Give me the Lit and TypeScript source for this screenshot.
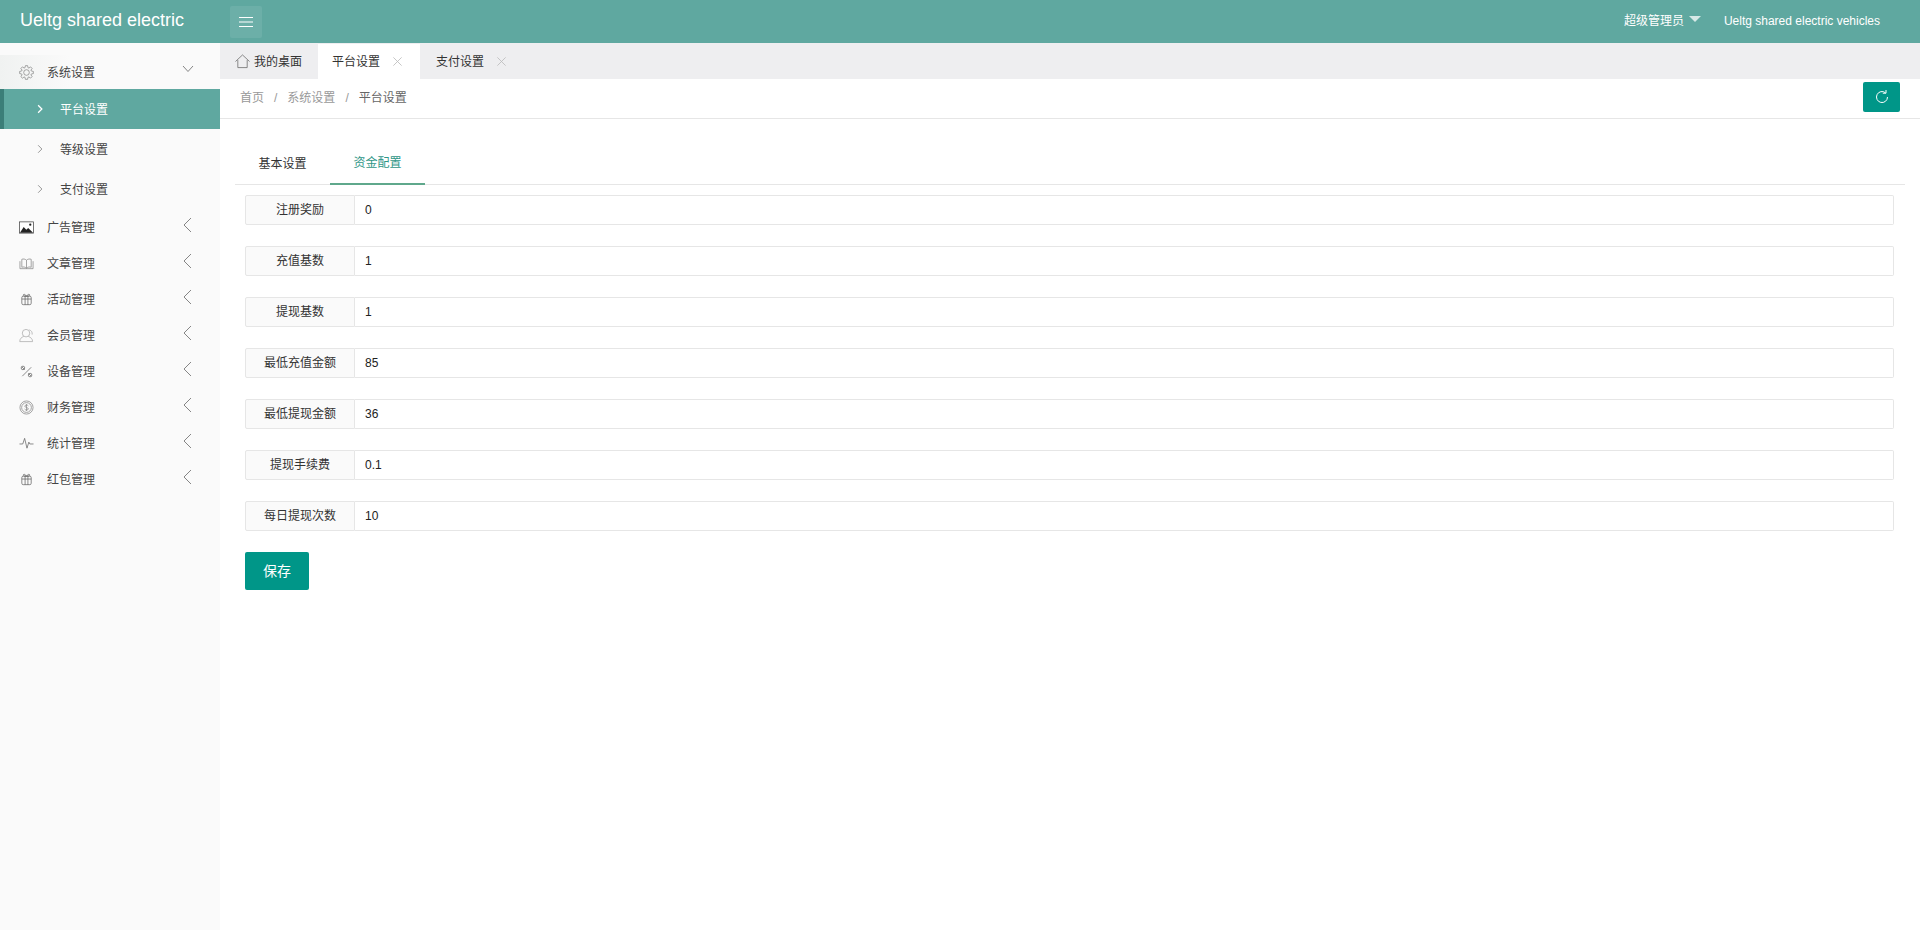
import { LitElement, html, css, svg } from "lit";
import { customElement } from "lit/decorators.js";

const ic = (b: unknown, cls = "ic") => html`<svg class=${cls} viewBox="0 0 16 16" fill="none" stroke="currentColor" stroke-width="0.8">${b}</svg>`;

function gearPath() {
  const pts: string[] = [];
  const teeth = 8;
  for (let i = 0; i < teeth; i++) {
    const a = (i / teeth) * Math.PI * 2;
    const w = Math.PI / teeth;
    const p = (r: number, t: number) => `${(8 + r * Math.cos(t)).toFixed(2)} ${(8 + r * Math.sin(t)).toFixed(2)}`;
    pts.push(p(5.4, a - w * 0.75), p(7.4, a - w * 0.4), p(7.4, a + w * 0.4), p(5.4, a + w * 0.75));
  }
  return "M" + pts.join("L") + "Z";
}

const icons: Record<string, unknown> = {
  gear: svg`<circle cx="8" cy="8" r="3"/><path d=${gearPath()}/>`,
  image: svg`<rect x="0.5" y="2" width="15" height="12" fill="#fff" stroke="#444"/><path d="M1 13.500l4-6 2.800 3 2-2 5.200 5z" fill="#222" stroke="none"/><circle cx="12" cy="5" r="1.200" fill="#222" stroke="none"/>`,
  book: svg`<path d="M8 4.500C6.500 3 4.500 3 3 3.500V12C4.500 11.500 6.500 11.500 8 13c1.500-1.500 3.500-1.500 5-1V3.500C11.500 3 9.500 3 8 4.500zM8 4.500V13M1 5.500V13.500H15V5.500"/>`,
  gift: svg`<rect x="3" y="4.500" width="10" height="9" rx="1.500"/><path d="M3 7.500h10M6.500 4.500v9M9.500 4.500v9M8 4.500C6.500 2 4.500 2 4.500 3.500 4.500 4.500 8 4.500 8 4.500zM8 4.500C9.500 2 11.500 2 11.500 3.500 11.500 4.500 8 4.500 8 4.500z"/>`,
  user: svg`<circle cx="7.500" cy="5.500" r="4"/><path d="M5 9C2.500 10 .8 11.500 .8 14.500H14.500C14.500 11.500 12.500 10 10 9M11 2C13 2.500 14.500 4.500 14 7"/>`,
  tool: svg`<path d="M3.500 13L13 3.500M3 3l3 3M10 10l3 3"/><circle cx="4.200" cy="4.200" r="1.900"/><circle cx="11.800" cy="11.800" r="1.900"/>`,
  money: svg`<circle cx="8" cy="8" r="7"/><circle cx="8" cy="8" r="5.200"/><path d="M10 6.300C9.500 5.100 6.200 4.900 6.200 6.600 6.200 8.300 10 7.700 10 9.500 10 11.100 6.500 11 6 9.700M8 4.300v7.400"/>`,
  pulse: svg`<path d="M.5 8.500H4L6 2.500 8.500 13 10.500 6.500 11.500 8.500H15.500"/>`,
};

const L = (p: string) => svg`<path d=${p}/>`;

@customElement("app-root")
export class AppRoot extends LitElement {
  static styles = css`
    :host { display: block; width: 1920px; height: 930px; overflow: hidden; background: #fff; color: #333; font: 12px/1.5 "Liberation Sans", "Noto Sans CJK SC", sans-serif; }
    * { box-sizing: border-box; }
    .top { height: 43px; background: #5fa8a0; color: #fff; display: flex; align-items: center; }
    .logo { width: 230px; padding-left: 20px; padding-bottom: 2px; font-size: 18px; }
    .burger { width: 32px; height: 32px; background: #6cafa8; border-radius: 2px; display: flex; align-items: center; justify-content: center; }
    .b { width: 16px; height: 16px; stroke-width: 1.100; }
    .top .sp { flex: 1; }
    .admin { display: flex; align-items: center; gap: 5px; margin-right: 23px; padding-bottom: 2px; }
    .tri { width: 0; height: 0; border: 6px solid transparent; border-top: 6px solid #d6e9e7; border-bottom: 0; margin-top: -3px; }
    .site { margin-right: 40px; padding-bottom: 2px; }
    .body { display: flex; height: 887px; }
    .side { width: 220px; background: #fafafa; padding-top: 12px; flex: none; }
    .item { height: 36px; display: flex; align-items: center; padding-left: 19px; color: #444; }
    .item.open { height: 34px; background: linear-gradient(90deg, #f0f2f1, #fafafa 70px); }
    .ic { width: 15px; height: 15px; color: #666; flex: none; margin-right: 13px; }
    .ic.light { color: #aaa; }
    .ic.mid { color: #888; }
    .name { flex: 1; padding-top: 1px; }
    .chev { width: 16px; height: 16px; margin-right: 24px; color: #777; margin-top: -4px; flex: none; stroke-width: 0.900; }
    .sub { height: 40px; display: flex; align-items: center; padding-left: 35px; color: #444; }
    .sub span { padding-top: 2px; }
    .arrow { width: 10px; height: 10px; margin-right: 15px; color: #777; flex: none; stroke-width: 1.200; }
    .sub.on { background: #5fa8a0; color: #fff; border-left: 4px solid #3b7e78; padding-left: 31px; }
    .sub.on .arrow { color: #fff; stroke-width: 2; }
    .main { flex: 1; min-width: 0; display: flex; flex-direction: column; }
    .tabs { height: 36px; background: #eeeef0; display: flex; align-items: stretch; padding-top: 1px; }
    .tab { display: flex; align-items: center; padding: 0 15px 0 16px; color: #333; }
    .tab.home { padding: 0 0 0 15px; width: 98px; }
    .h { width: 15px; height: 15px; margin-right: 4px; color: #666; flex: none; }
    .tab.on { background: #fff; width: 102px; padding-left: 14px; padding-right: 0; }
    .x { width: 11px; height: 11px; margin-left: 12px; color: #bbb; flex: none; stroke-width: 1.200; }
    .crumb { height: 40px; border-bottom: 1px solid #e6e6e6; display: flex; align-items: center; padding: 0 0 2px 20px; color: #999; }
    .crumb .s { margin: 0 10px; }
    .crumb .c { color: #666; }
    .crumb .sp { flex: 1; }
    .refresh { width: 37px; height: 30px; background: #009688; border-radius: 2px; margin-right: 20px; margin-top: -1px; color: #fff; display: flex; align-items: center; justify-content: center; }
    .r { width: 16px; height: 16px; stroke-width: 1; }
    .content { padding: 22px 15px 0; }
    .tt { display: flex; height: 44px; border-bottom: 1px solid #e6e6e6; margin-bottom: 10px; }
    .t { width: 95px; display: flex; align-items: center; justify-content: center; height: 44px; padding-top: 2px; color: #333; }
    .t.on { color: #2f9687; border-bottom: 2px solid #5fa88c; padding-top: 2px; }
    .form { padding: 0 11px 0 10px; display: flex; flex-direction: column; gap: 21px; }
    .row { display: flex; height: 30px; }
    .lab { width: 110px; flex: none; border: 1px solid #e6e6e6; border-radius: 2px 0 0 2px; background: #fafafa; display: flex; align-items: center; justify-content: center; color: #333; }
    .val { flex: 1; border: 1px solid #e6e6e6; border-left: 0; border-radius: 0 2px 2px 0; display: flex; align-items: center; padding-left: 10px; color: #222; }
    .save { margin: 21px 0 0 10px; width: 64px; height: 38px; background: #009688; color: #fff; border-radius: 2px; display: flex; align-items: center; justify-content: center; font-size: 14px; }
  `;

  render() {
    const menu = [["image", "广告管理", "ic"], ["book", "文章管理", "ic mid"], ["gift", "活动管理", "ic"], ["user", "会员管理", "ic light"], ["tool", "设备管理", "ic"], ["money", "财务管理", "ic mid"], ["pulse", "统计管理", "ic"], ["gift", "红包管理", "ic"]];
    const rows = [["注册奖励", "0"], ["充值基数", "1"], ["提现基数", "1"], ["最低充值金额", "85"], ["最低提现金额", "36"], ["提现手续费", "0.1"], ["每日提现次数", "10"]];
    const sub = (n: string, on = false) => html`<div class="sub ${on ? "on" : ""}">${ic(L("M5 2l6 6-6 6"), "arrow")}<span>${n}</span></div>`;
    const close = ic(L("M2 2l12 12M14 2L2 14"), "x");
    return html`
      <div class="top">
        <div class="logo">Ueltg shared electric</div>
        <div class="burger">${ic(L("M1 3.500h14M1 8h14M1 12.500h14"), "b")}</div>
        <div class="sp"></div>
        <div class="admin">超级管理员<span class="tri"></span></div>
        <div class="site">Ueltg shared electric vehicles</div>
      </div>
      <div class="body">
        <aside class="side">
          <div class="item open">${ic(icons.gear, "ic mid")}<span class="name">系统设置</span>${ic(L("M3 4l5 5.500 5-5.500"), "chev")}</div>
          ${sub("平台设置", true)}${sub("等级设置")}${sub("支付设置")}
          ${menu.map(([i, n, c]) => html`<div class="item">${ic(icons[i], c)}<span class="name">${n}</span>${ic(L("M11 1L4 8l7 7"), "chev")}</div>`)}
        </aside>
        <main class="main">
          <div class="tabs">
            <div class="tab home">${ic(L("M.5 8L8 1l7.500 7M3 6.500V14.500h10V6.500"), "h")}我的桌面</div>
            <div class="tab on">平台设置${close}</div>
            <div class="tab">支付设置${close}</div>
          </div>
          <div class="crumb">
            <span>首页</span><span class="s">/</span><span>系统设置</span><span class="s">/</span><span class="c">平台设置</span>
            <span class="sp"></span>
            <div class="refresh">${ic(L("M13.500 8A5.500 5.500 0 1 1 11.500 3.800M12 1v3.200H8.800"), "r")}</div>
          </div>
          <div class="content">
            <div class="tt"><div class="t">基本设置</div><div class="t on">资金配置</div></div>
            <div class="form">
              ${rows.map(([a, b]) => html`<div class="row"><div class="lab">${a}</div><div class="val">${b}</div></div>`)}
            </div>
            <div class="save">保存</div>
          </div>
        </main>
      </div>
    `;
  }
}
